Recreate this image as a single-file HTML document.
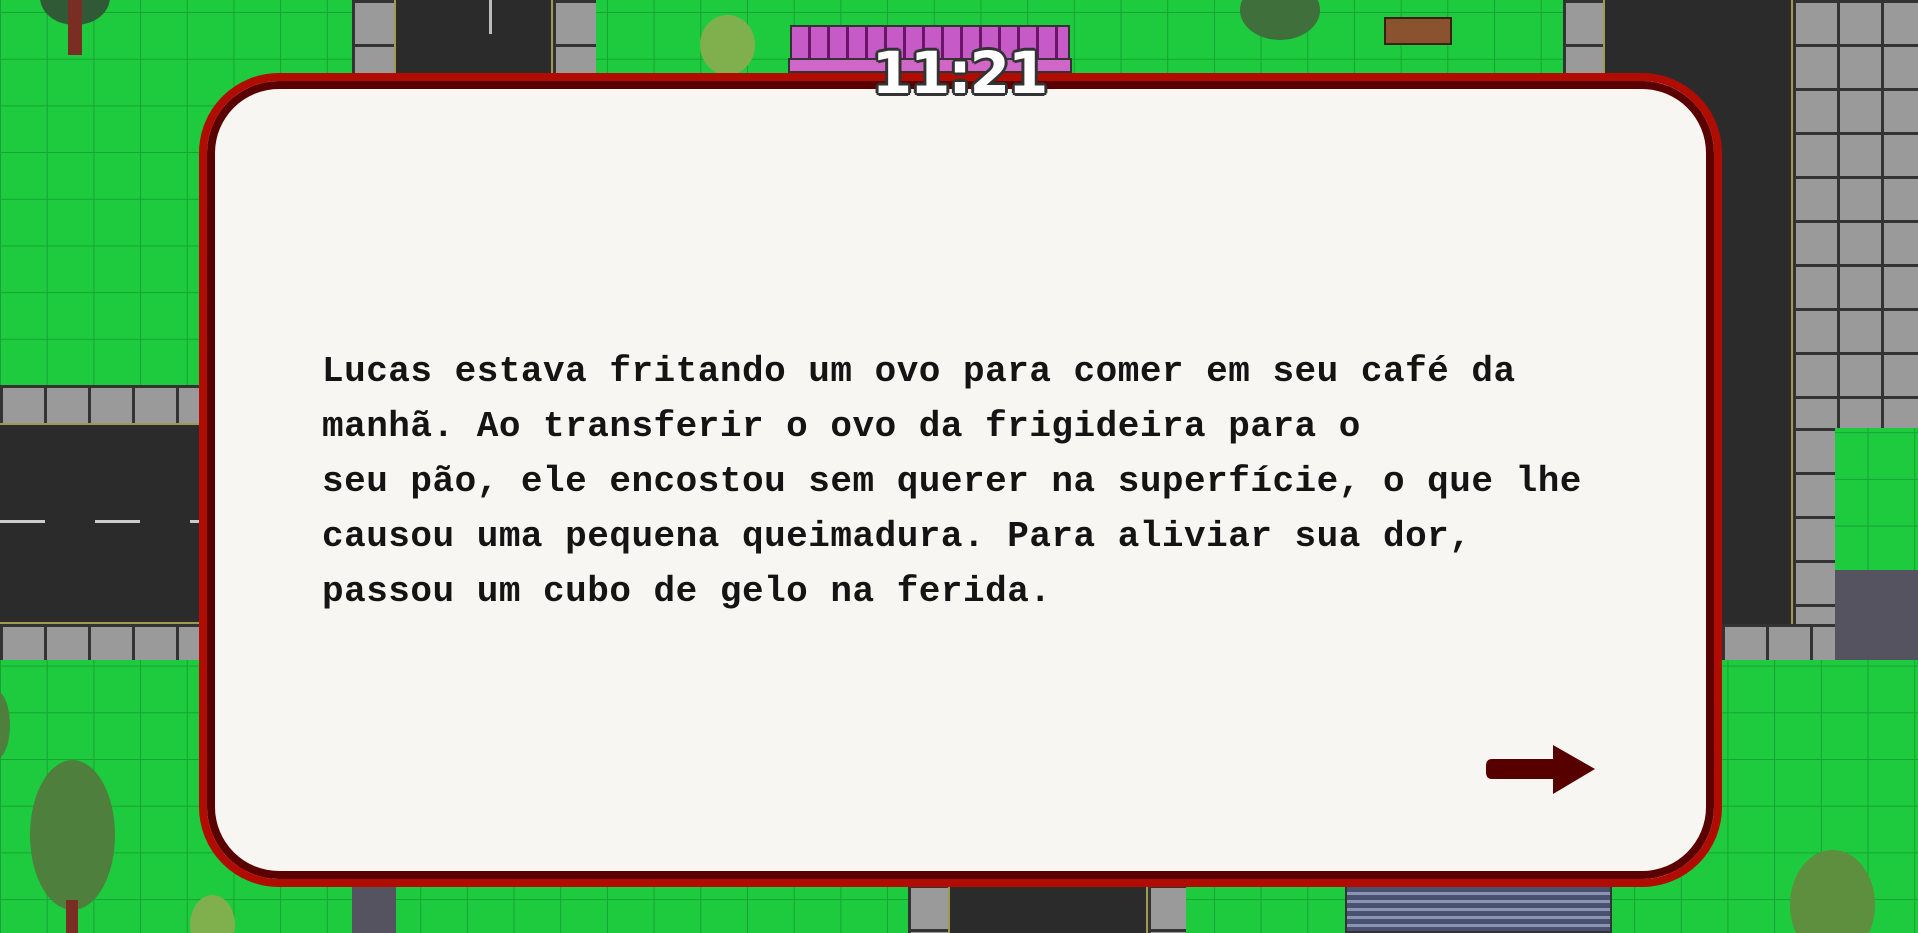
<!DOCTYPE html>
<html><head><meta charset="utf-8"><style>
*{margin:0;padding:0;box-sizing:border-box}
html,body{width:1918px;height:933px;overflow:hidden}
body{position:relative;background:#1ecb3e;
background-image:linear-gradient(#17a233 1px,transparent 1px),linear-gradient(90deg,#17a233 1px,transparent 1px);
background-size:46.7px 46.7px;background-position:0 12px}
.a{position:absolute}
.road{background:#2b2b2b}
.walk{background:#9a9a9a;background-image:linear-gradient(#333 3px,transparent 3px),linear-gradient(90deg,#333 3px,transparent 3px);background-size:44px 44px}
.tree{position:absolute;border-radius:50%;background:#4f8a3a}
#box{position:absolute;left:199px;top:73px;width:1523px;height:814px;background:#f8f6f2;border:8px solid #b00d00;border-radius:80px;box-shadow:inset 0 0 0 8px #5a0000}
#txt{position:absolute;left:322px;top:344px;font-family:"Liberation Mono",monospace;font-weight:bold;font-size:36px;line-height:55px;color:#141414;white-space:pre;letter-spacing:0.5px}
#time{position:absolute;left:863px;top:38px;width:192px;text-align:center;font-family:"DejaVu Sans","Liberation Sans",sans-serif;font-weight:bold;font-size:58px;color:#fff;line-height:70px;letter-spacing:-2px;
text-shadow:-2px -2px 0 #333,2px -2px 0 #333,-2px 2px 0 #333,2px 2px 0 #333,0 3px 0 #333,3px 0 0 #333,-3px 0 0 #333,0 -3px 0 #333}
</style></head><body>
<div class="a walk" style="left:0;top:385px;width:200px;height:38px"></div>
<div class="a road" style="left:0;top:423px;width:200px;height:201px;border-top:2px solid #a09a50;border-bottom:2px solid #a09a50"></div>
<div class="a" style="left:0;top:520px;width:200px;height:3px;background:repeating-linear-gradient(90deg,#ccc 0 45px,transparent 45px 95px)"></div>
<div class="a walk" style="left:0;top:624px;width:200px;height:36px"></div>
<div class="a walk" style="left:352px;top:0;width:42px;height:74px"></div>
<div class="a road" style="left:394px;top:0;width:159px;height:74px;border-left:2px solid #a09a50;border-right:2px solid #a09a50"></div>
<div class="a" style="left:489px;top:0;width:3px;height:34px;background:#bbb"></div>
<div class="a walk" style="left:553px;top:0;width:43px;height:74px"></div>
<div class="a walk" style="left:1563px;top:0;width:40px;height:74px"></div>
<div class="a road" style="left:1603px;top:0;width:190px;height:624px;border-left:2px solid #a09a50;border-right:2px solid #a09a50"></div>
<div class="a walk" style="left:1793px;top:0;width:125px;height:428px"></div>
<div class="a walk" style="left:1793px;top:428px;width:42px;height:232px"></div>
<div class="a" style="left:1835px;top:570px;width:83px;height:90px;background:#55535f"></div>
<div class="a walk" style="left:1722px;top:624px;width:113px;height:36px"></div>
<div class="a" style="left:790px;top:25px;width:280px;height:48px;background:repeating-linear-gradient(90deg,#c65ac6 0 16px,#6a156a 16px 19px);border:2px solid #333"></div>
<div class="a" style="left:788px;top:58px;width:284px;height:15px;background:#d067c8;border:2px solid #333"></div>
<div class="a" style="left:1384px;top:17px;width:68px;height:28px;background:#8b5230;border:2px solid #3a2010"></div>
<div class="tree" style="left:40px;top:-30px;width:70px;height:55px;background:#2f5a35"></div>
<div class="a" style="left:68px;top:0;width:14px;height:55px;background:#7a2d22"></div>
<div class="tree" style="left:1240px;top:-20px;width:80px;height:60px;background:#3f6f3a"></div>
<div class="tree" style="left:700px;top:15px;width:55px;height:60px;background:#7fb04d"></div>
<div class="tree" style="left:30px;top:760px;width:85px;height:150px;background:#4e7f3c"></div>
<div class="a" style="left:66px;top:900px;width:12px;height:33px;background:#7a2d22"></div>
<div class="tree" style="left:190px;top:895px;width:45px;height:60px;background:#7fb04d"></div>
<div class="tree" style="left:1790px;top:850px;width:85px;height:110px;background:#5d8f3f"></div>
<div class="tree" style="left:-20px;top:690px;width:30px;height:70px;background:#4e7f3c"></div>
<div class="a" style="left:352px;top:885px;width:44px;height:48px;background:#55535f"></div>
<div class="a walk" style="left:908px;top:885px;width:40px;height:48px"></div>
<div class="a road" style="left:948px;top:885px;width:200px;height:48px;border-left:2px solid #a09a50;border-right:2px solid #a09a50"></div>
<div class="a walk" style="left:1148px;top:885px;width:38px;height:48px"></div>
<div class="a" style="left:1345px;top:885px;width:267px;height:48px;background:repeating-linear-gradient(#4a5070 0 5px,#8a93b0 5px 8px);border:2px solid #333"></div>
<div id="box"></div>
<div id="time">11:21</div>
<div id="txt">Lucas estava fritando um ovo para comer em seu café da
manhã. Ao transferir o ovo da frigideira para o
seu pão, ele encostou sem querer na superfície, o que lhe
causou uma pequena queimadura. Para aliviar sua dor,
passou um cubo de gelo na ferida.</div>
<svg class="a" style="left:1486px;top:745px" width="110" height="50" viewBox="0 0 110 50">
<path d="M6 14 H67 V0 L109 24 L67 49 V34 H6 Q0 34 0 27 V21 Q0 14 6 14 Z" fill="#560000"/>
</svg>
</body></html>
